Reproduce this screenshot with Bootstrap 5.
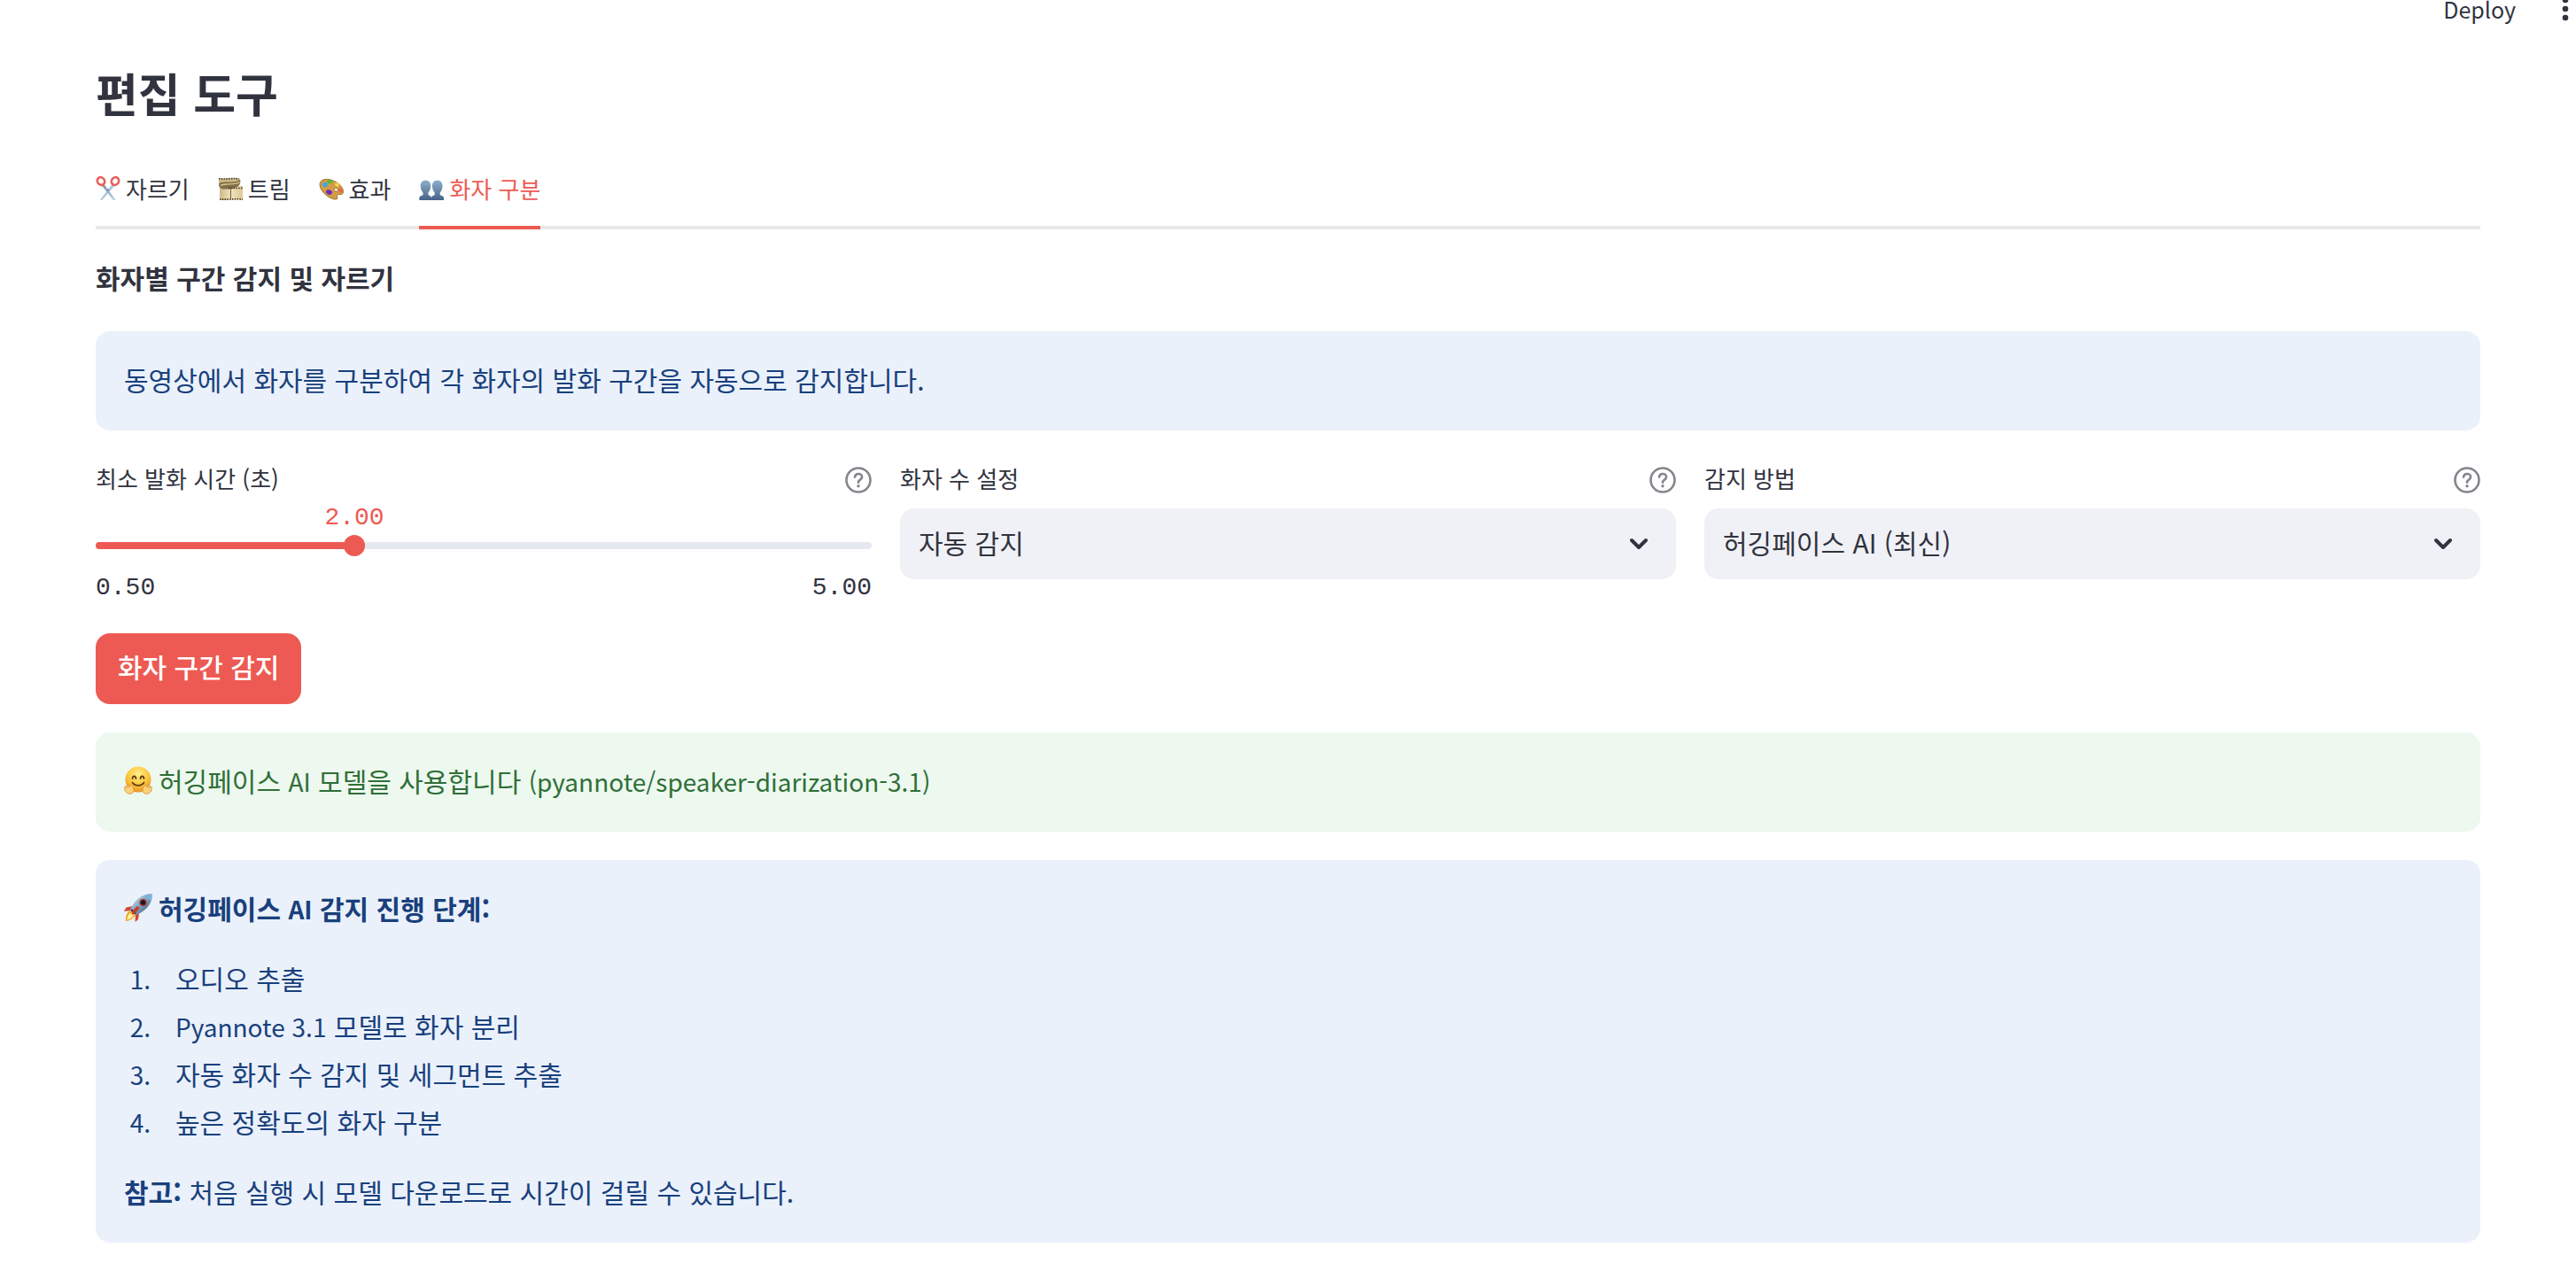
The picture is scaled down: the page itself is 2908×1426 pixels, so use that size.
<!DOCTYPE html>
<html lang="ko">
<head>
<meta charset="utf-8">
<meta name="viewport" content="width=device-width, initial-scale=1">
<title>편집 도구</title>
<link href="https://cdn.jsdelivr.net/npm/bootstrap@5.3.0/dist/css/bootstrap.min.css" rel="stylesheet">
<style>
:root { --ink: #31333f; --accent: #ed5a53; --field: #f0f1f6; }
body { font-family: "Noto Sans CJK KR", "Noto Sans", sans-serif; font-size: 30px; line-height: 48px; color: var(--ink); background: #fff; }
.latin { font-size: 28px; line-height: 1; }
.topbar { height: 20px; padding-right: 8px; gap: 52px; }
.topbar .btn { font-size: 25px; line-height: 20px; color: var(--ink); }
.page-body { padding: 51px 108px 20px; }
.page-title { font-size: 52px; line-height: 68px; font-weight: 700; margin-bottom: 34px; }
.tool-tabs { gap: 32px; border-bottom: 4px solid #e8e8ea; margin-bottom: 28px; }
.tool-tabs .nav-link { display: flex; align-items: center; gap: 6px; padding: 0 0 2px; margin-bottom: -4px; font-size: 26px; line-height: 80px; color: var(--ink); border: 0; border-bottom: 4px solid transparent; border-radius: 0; background: none; }
.tool-tabs .nav-link.active { color: var(--accent); border-color: var(--accent); background: none; }
.tool-tabs svg { width: 28px; height: 28px; }
.section-title { font-size: 30px; line-height: 52px; font-weight: 700; margin-bottom: 35px; }
.notice { border: 0; border-radius: 16px; padding: 30px 32px 34px; margin-bottom: 32px; }
.notice-info { background: #eaf1fb; color: #19407c; }
.notice-success { background: #edf8ef; color: #2f6f37; }
.notice svg { width: 32px; height: 32px; margin-right: 7px; flex: none; }
.controls { --bs-gutter-x: 32px; margin-bottom: 35px; }
.field-head { height: 48px; margin-bottom: 8px; }
.field-head label { font-size: 26px; line-height: 44px; padding-bottom: 4px; }
.field-head .btn { line-height: 0; }
.form-select { --bs-form-select-bg-img: url("data:image/svg+xml,%3Csvg xmlns='http://www.w3.org/2000/svg' viewBox='0 0 20 20'%3E%3Cpath d='M2 6l8 8 8-8' fill='none' stroke='%2331333f' stroke-width='4' stroke-linecap='round' stroke-linejoin='round'/%3E%3C/svg%3E"); height: 80px; border: 0; border-radius: 16px; padding: 0 64px 4px 21px; font-size: 30px; line-height: 48px; color: var(--ink); background-color: var(--field); background-position: right 32px center; background-size: 20px 20px; }
.readout { font-family: "Liberation Mono", monospace; font-size: 28px; line-height: 32px; }
.slider-value { color: var(--accent); transform: translateX(-50%); width: max-content; margin-top: -5px; }
.slider-track { height: 8px; border-radius: 4px; margin: 11px 0 28px; }
.slider-track .form-range { display: block; width: calc(100% + 24px); height: 24px; margin: 0 -12px; position: relative; top: -8px; }
.form-range::-webkit-slider-runnable-track { background: transparent; height: 24px; }
.form-range::-webkit-slider-thumb { width: 24px; height: 24px; margin: 0; background: var(--accent); }
.btn-detect { height: 80px; padding: 0 25px 6px; border: 0; border-radius: 16px; font-size: 30px; font-weight: 500; color: #fff; background: var(--accent); margin-bottom: 32px; }
.steps { margin: 28px 0; padding-left: 38px; line-height: 54px; }
.steps li::marker { font-size: 28px; }
.steps li { padding-left: 20px; }
</style>
<script src="https://cdn.jsdelivr.net/npm/bootstrap@5.3.0/dist/js/bootstrap.bundle.min.js" defer></script>
</head>
<body>
<svg width="0" height="0" class="position-absolute" aria-hidden="true">
  <defs>
    <linearGradient id="steel" x1="0" y1="0" x2="0" y2="1"><stop offset="0" stop-color="#7d8d9b"/><stop offset="1" stop-color="#b9d7ee"/></linearGradient>
    <linearGradient id="person" x1="0" y1="0" x2="0" y2="1"><stop offset="0" stop-color="#8fb0cc"/><stop offset="1" stop-color="#456289"/></linearGradient>
    <linearGradient id="film" x1="0" y1="0" x2="1" y2="0"><stop offset="0" stop-color="#cdb98a"/><stop offset=".5" stop-color="#f1e3bb"/><stop offset="1" stop-color="#dcc894"/></linearGradient>
    <radialGradient id="face" cx=".5" cy=".3" r=".7"><stop offset="0" stop-color="#fff08a"/><stop offset=".6" stop-color="#fbc53c"/><stop offset="1" stop-color="#e8912a"/></radialGradient>
    <linearGradient id="hull" x1="0" y1="0" x2="1" y2="1"><stop offset="0" stop-color="#dfeaf2"/><stop offset=".5" stop-color="#7fa3c0"/><stop offset="1" stop-color="#2f4a68"/></linearGradient>
    <symbol id="help" viewBox="0 0 30 30"><g fill="none" stroke="#85868d" stroke-width="2.6" stroke-linecap="round"><circle cx="15" cy="15" r="13.5"/><path d="M11 11.7c.3-2.4 2-3.7 4.1-3.7 2.3 0 4 1.5 4 3.5 0 3.2-4.1 3.1-4.1 6.3"/></g><circle cx="15" cy="21.8" r="1.7" fill="#85868d"/></symbol>
  </defs>
</svg>

<header class="topbar d-flex justify-content-end align-items-center">
  <button type="button" class="btn p-0 border-0">Deploy</button>
  <button type="button" class="btn p-0 border-0" aria-label="메뉴"><svg class="d-block" width="8" height="28" viewBox="0 0 8 28" fill="#31333f"><circle cx="4" cy="4" r="3.3"/><circle cx="4" cy="14" r="3.3"/><circle cx="4" cy="24" r="3.3"/></svg></button>
</header>

<main class="page-body container-fluid">
  <h1 class="page-title">편집 도구</h1>

  <ul class="nav tool-tabs" role="tablist">
    <li class="nav-item" role="presentation"><button class="nav-link" type="button" role="tab">
      <svg viewBox="0 0 28 28" aria-hidden="true"><path d="M19 8.500 21 11 7 27.200 5.200 26.600Z" fill="#a9c5dc"/><path d="M9 8.500 7.200 11 20 27.200 22.500 26.500Z" fill="url(#steel)"/><g fill="none" stroke="#e8605c" stroke-width="2.600"><ellipse cx="6" cy="5.500" rx="4" ry="4.500" transform="rotate(-35 6 5.500)"/><ellipse cx="22" cy="5.500" rx="4" ry="4.500" transform="rotate(35 22 5.500)"/></g><circle cx="14" cy="15.200" r=".8" fill="#456"/></svg>
      자르기</button></li>
    <li class="nav-item" role="presentation"><button class="nav-link" type="button" role="tab">
      <svg viewBox="0 0 28 28" aria-hidden="true"><path d="M1 2C8 3.500 16 1 24 2.500c2 5-4 7-12 7.500L1 12Z" fill="#cbb886"/><path d="M1 2.500C8 4 16 1.500 24 3" fill="none" stroke="#453a24" stroke-width="1.600" stroke-dasharray="1.500 1.300"/><path d="M2 11h26V27c-9-1.500-18 1-26-.3Z" fill="url(#film)"/><path d="M2 7.500C8 5 20 8.500 25 3.500c2 7-4 10.500-13 11H5C1 13 .5 9.500 2 7.500Z" fill="#807048"/><path d="M3 10.500C8 7.500 20 10.500 24.500 6.500" fill="none" stroke="#d9c58f" stroke-width="1.400"/><path d="M12 13.500h16M2 25.800c8 1.200 17-1 26 .3" fill="none" stroke="#40351f" stroke-width="1.600" stroke-dasharray="1.500 1.300"/><path d="M14.500 14.500V25" stroke="#6e6040"/></svg>
      트림</button></li>
    <li class="nav-item" role="presentation"><button class="nav-link" type="button" role="tab">
      <svg viewBox="0 0 28 28" aria-hidden="true"><path d="M1 9.500C1 3.500 8 2 15 4.500c8 2.800 13.500 9.500 12.500 14-.8 3-4 1.500-6 2.200-2.500.8 1 4.200-1.500 5.200C15 27.500 1 18.500 1 9.500Z" fill="#d39b45" stroke="#a8732d"/><path d="M17 14.500c1.500-2 5-.5 4.500 1.500s-4.500.8-4.500-1.500Z" fill="#fff" stroke="#8b5a20" stroke-width=".7"/><ellipse cx="7" cy="9.500" rx="3" ry="2.700" fill="#43a8e0"/><ellipse cx="12.500" cy="6" rx="3" ry="2.300" fill="#58b83d"/><ellipse cx="20.500" cy="9.500" rx="2.600" ry="2" fill="#f2d545" transform="rotate(30 20.500 9.500)"/><ellipse cx="24.300" cy="16" rx="1.800" ry="2.800" fill="#e5644d" transform="rotate(-30 24.300 16)"/><ellipse cx="11.500" cy="18" rx="3.500" ry="2.700" fill="#6d2cb8" transform="rotate(20 11.500 18)"/></svg>
      효과</button></li>
    <li class="nav-item" role="presentation"><button class="nav-link active" type="button" role="tab" aria-selected="true">
      <svg viewBox="0 0 28 28" aria-hidden="true"><g fill="url(#person)"><path d="M20.700 4.500c3.800 0 6 3 5.800 7-.2 3-1.300 5-2.800 7v2.500c1.800 1 4 1.200 4.300 3.500V27H14v-2.500c.3-2.300 2-2.500 3.700-3.500v-2.500c-1.500-2-2.600-4-2.800-7-.2-4 2-7 5.800-7Z"/><path d="M7.500 4.500c3.800 0 6 3 5.800 7-.2 3-1.300 5-2.800 7v2.500c1.500 1 3.200 1.200 3.500 3.500V27H.3v-2.500C.6 22.200 2.800 22 4.500 21v-2.500c-1.500-2-2.600-4-2.800-7-.2-4 2-7 5.800-7Z"/></g></svg>
      화자 구분</button></li>
  </ul>

  <h2 class="section-title">화자별 구간 감지 및 자르기</h2>

  <div class="alert notice notice-info" role="alert">동영상에서 화자를 구분하여 각 화자의 발화 구간을 자동으로 감지합니다.</div>

  <div class="row controls">
    <div class="col-4">
      <div class="field-head d-flex justify-content-between align-items-center">
        <label for="minSpeech">최소 발화 시간 (초)</label>
        <button type="button" class="btn p-0 border-0" aria-label="도움말"><svg width="30" height="30"><use href="#help"/></svg></button>
      </div>
      <div class="readout slider-value" style="margin-left:33.333%">2.00</div>
      <div class="slider-track" style="background:linear-gradient(to right,#ed5a53 33.333%,#e6e8f0 33.333%)"><input type="range" class="form-range" id="minSpeech" min="0.5" max="5" step="0.5" value="2"></div>
      <div class="readout d-flex justify-content-between"><span>0.50</span><span>5.00</span></div>
    </div>
    <div class="col-4">
      <div class="field-head d-flex justify-content-between align-items-center">
        <label for="speakerCount">화자 수 설정</label>
        <button type="button" class="btn p-0 border-0" aria-label="도움말"><svg width="30" height="30"><use href="#help"/></svg></button>
      </div>
      <select class="form-select" id="speakerCount"><option>자동 감지</option></select>
    </div>
    <div class="col-4">
      <div class="field-head d-flex justify-content-between align-items-center">
        <label for="method">감지 방법</label>
        <button type="button" class="btn p-0 border-0" aria-label="도움말"><svg width="30" height="30"><use href="#help"/></svg></button>
      </div>
      <select class="form-select" id="method"><option>허깅페이스 AI (최신)</option></select>
    </div>
  </div>

  <button type="button" class="btn btn-detect d-block">화자 구간 감지</button>

  <div class="alert notice notice-success d-flex align-items-center" role="alert">
    <svg viewBox="0 0 32 32" aria-hidden="true"><circle cx="16" cy="15" r="14.500" fill="url(#face)"/><path d="M9.500 14c.5-3.500 3.500-3.500 4 0M18.500 14c.5-3.500 3.500-3.500 4 0" fill="none" stroke="#5d3a12" stroke-width="1.800" stroke-linecap="round"/><path d="M9.500 18.500c3 4.500 10 4.500 13 0" fill="none" stroke="#5d3a12" stroke-width="1.600" stroke-linecap="round"/><path d="M.8 23.500c1-1 2.200.5 3 1L2.900 22c.2-1.600 1.600-1.300 2.100 0l1 2 .7-2.200c1-1.600 2.300-.7 2.200.8 2.800 2.700 3 6.500.3 8-3 1.400-6 .3-7.900-2.500-.8-1-.6-1.600-.2-1.900L.8 25ZM31.200 23.500c-1-1-2.200.5-3 1l.9-2.500c-.2-1.600-1.600-1.300-2.100 0l-1 2-.7-2.200c-1-1.600-2.300-.7-2.200.8-2.800 2.700-3 6.500-.3 8 3 1.400 6 .3 7.900-2.500.8-1 .6-1.600.2-1.900l.3-1.200Z" fill="#fbd277" stroke="#d9913a" stroke-width=".9"/></svg>
    <div>허깅페이스 <span class="latin">AI</span> 모델을 사용합니다 <span class="latin">(pyannote/speaker-diarization-3.1)</span></div>
  </div>

  <div class="alert notice notice-info mb-0" role="alert">
    <div class="d-flex align-items-center">
      <svg viewBox="0 0 32 32" aria-hidden="true"><path d="M10 14 2.500 15.500 0 20l7-1ZM17 22l-1 7-3.500 3 .5-8Z" fill="#d9442f"/><path d="M7 19c-4 1.500-5.500 7-5 12 5-.5 9-3 11-7Z" fill="#f3a62c"/><path d="M7 22c-2.500 1.500-3.500 5-3.500 7.500C6.500 29 9.500 27 11 24.500Z" fill="#fff0a0"/><path d="M31.500.5C22 0 13 5 7 18l6.500 6C26 19 32.500 10 31.500.5Z" fill="url(#hull)"/><path d="M31.500.5c-3-.2-6 .3-8.500 1.200l7 6.800c1-2.500 1.600-5.300 1.500-8Z" fill="#7cb0de"/><circle cx="21.500" cy="10" r="4" fill="#9e2b28"/><circle cx="21.500" cy="10" r="2.500" fill="#15181e"/><path d="m8 18 5 4.800" stroke="#2b3440" stroke-width="2"/><path d="M15 14c-3 2-5.500 6-6.500 9.500 4-1 7-4 9-7.500Z" fill="#c93a2a"/></svg>
      <strong>허깅페이스 <span class="latin">AI</span> 감지 진행 단계:</strong>
    </div>
    <ol class="steps">
      <li>오디오 추출</li>
      <li><span class="latin">Pyannote 3.1</span> 모델로 화자 분리</li>
      <li>자동 화자 수 감지 및 세그먼트 추출</li>
      <li>높은 정확도의 화자 구분</li>
    </ol>
    <p class="mb-0"><strong>참고:</strong> 처음 실행 시 모델 다운로드로 시간이 걸릴 수 있습니다.</p>
  </div>
</main>
</body>
</html>
